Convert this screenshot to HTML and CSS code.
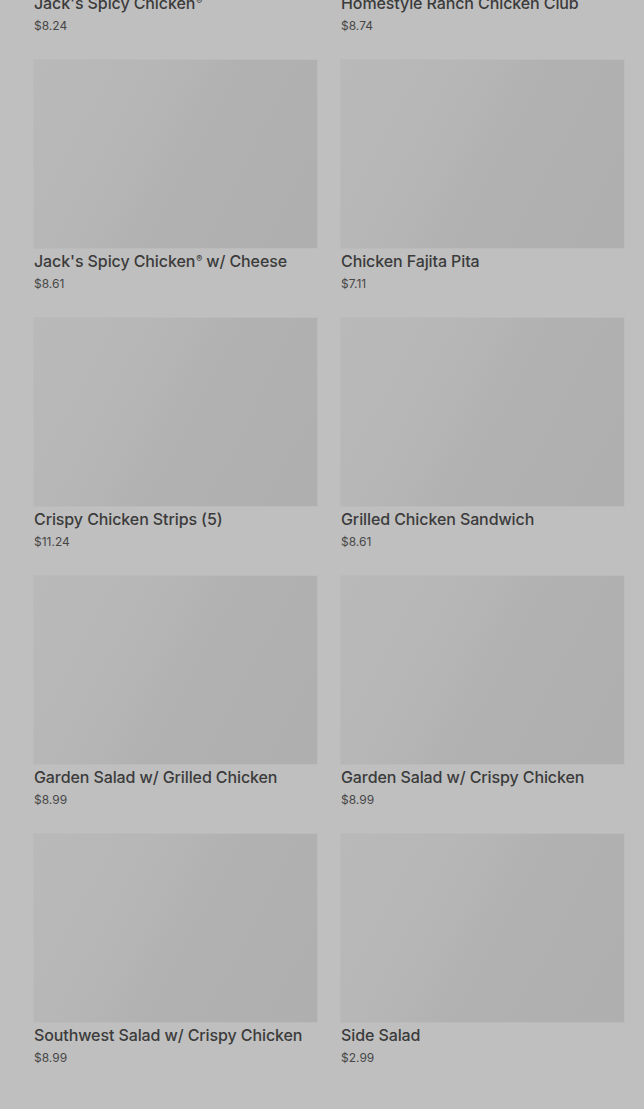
FILE: index.html
```html
<!DOCTYPE html>
<html lang="en">
<head>
<meta charset="utf-8">
<title>Menu</title>
<link rel="stylesheet" href="styles.css">
</head>
<body>
<main class="menu">
  <div class="grid">
    <div class="card"><div class="thumb"></div><div class="name">Jack's Spicy Chicken<span class="reg">®</span></div><div class="price">$8.24</div></div>
    <div class="card"><div class="thumb"></div><div class="name">Homestyle Ranch Chicken Club</div><div class="price">$8.74</div></div>
    <div class="card"><div class="thumb"></div><div class="name">Jack's Spicy Chicken<span class="reg">®</span> w/ Cheese</div><div class="price">$8.61</div></div>
    <div class="card"><div class="thumb"></div><div class="name">Chicken Fajita Pita</div><div class="price">$7.11</div></div>
    <div class="card"><div class="thumb"></div><div class="name">Crispy Chicken Strips (5)</div><div class="price">$11.24</div></div>
    <div class="card"><div class="thumb"></div><div class="name">Grilled Chicken Sandwich</div><div class="price">$8.61</div></div>
    <div class="card"><div class="thumb"></div><div class="name">Garden Salad w/ Grilled Chicken</div><div class="price">$8.99</div></div>
    <div class="card"><div class="thumb"></div><div class="name">Garden Salad w/ Crispy Chicken</div><div class="price">$8.99</div></div>
    <div class="card"><div class="thumb"></div><div class="name">Southwest Salad w/ Crispy Chicken</div><div class="price">$8.99</div></div>
    <div class="card"><div class="thumb"></div><div class="name">Side Salad</div><div class="price">$2.99</div></div>
  </div>
</main>
</body>
</html>
```

FILE: styles.css
```css
html, body {
  margin: 0;
  padding: 0;
  background: #bfbfbf;
}
body {
  font-family: Inter, "Liberation Sans", Arial, sans-serif;
  color: #3a3a3a;
  min-height: 1109px;
  overflow: hidden;
}
.menu {
  padding: 0 20px 60px 34px;
  margin-top: -198px;
}
.grid {
  display: grid;
  grid-template-columns: 283px 283px;
  column-gap: 24px;
  row-gap: 22px;
}
.card {
  display: flex;
  flex-direction: column;
}
.thumb {
  height: 188px;
  background: linear-gradient(118deg, #b9b9b9 0%, #b6b6b6 35%, #b1b1b1 55%, #afafaf 100%);
  box-shadow: 0 0 0 1px #bbbbbb;
}
.name {
  margin-top: 2px;
  font-size: 16px;
  line-height: 22px;
  font-weight: 500;
  letter-spacing: -0.1px;
  color: #3b3b3b;
  white-space: nowrap;
}
.reg {
  font-size: 9px;
  vertical-align: 5px;
  line-height: 0;
  margin-left: 1px;
}
.price {
  font-size: 12px;
  line-height: 24px;
  color: #474747;
}
```
